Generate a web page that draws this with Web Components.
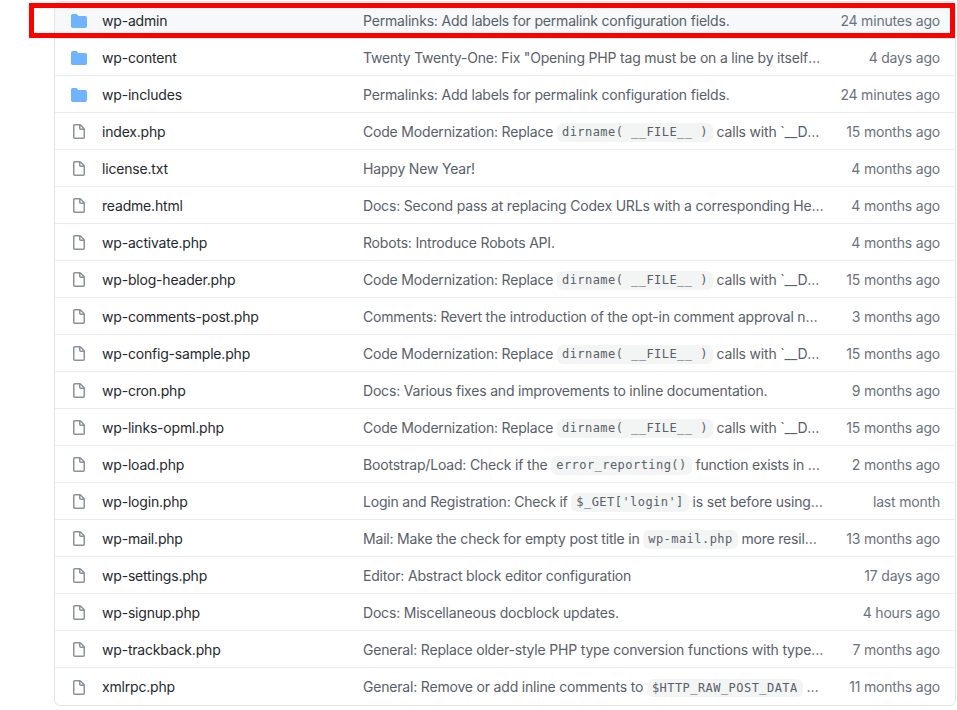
<!DOCTYPE html>
<html lang="en">
<head>
<meta charset="utf-8">
<title>wordpress files</title>
<style>
html,body{margin:0;padding:0;background:#fff}
body{font:14px/21px Inter,"Liberation Sans",sans-serif;color:#24292e}
</style>
</head>
<body>
<file-page>
<file-list>
<file-row kind="dir" name="wp-admin" age="24 minutes ago" hover>Permalinks: Add labels for permalink configuration fields.</file-row>
<file-row kind="dir" name="wp-content" age="4 days ago">Twenty Twenty-One: Fix "Opening PHP tag must be on a line by itself" coding standards violations.</file-row>
<file-row kind="dir" name="wp-includes" age="24 minutes ago">Permalinks: Add labels for permalink configuration fields.</file-row>
<file-row clip="457" name="index.php" age="15 months ago">Code Modernization: Replace <file-code>dirname( __FILE__ )</file-code> calls with `__DIR__` constant.</file-row>
<file-row name="license.txt" age="4 months ago">Happy New Year!</file-row>
<file-row clip="462" name="readme.html" age="4 months ago">Docs: Second pass at replacing Codex URLs with a corresponding HelpHub article.</file-row>
<file-row name="wp-activate.php" age="4 months ago">Robots: Introduce Robots API.</file-row>
<file-row clip="457" name="wp-blog-header.php" age="15 months ago">Code Modernization: Replace <file-code>dirname( __FILE__ )</file-code> calls with `__DIR__` constant.</file-row>
<file-row name="wp-comments-post.php" age="3 months ago">Comments: Revert the introduction of the opt-in comment approval notice.</file-row>
<file-row clip="457" name="wp-config-sample.php" age="15 months ago">Code Modernization: Replace <file-code>dirname( __FILE__ )</file-code> calls with `__DIR__` constant.</file-row>
<file-row name="wp-cron.php" age="9 months ago">Docs: Various fixes and improvements to inline documentation.</file-row>
<file-row clip="457" name="wp-links-opml.php" age="15 months ago">Code Modernization: Replace <file-code>dirname( __FILE__ )</file-code> calls with `__DIR__` constant.</file-row>
<file-row name="wp-load.php" age="2 months ago">Bootstrap/Load: Check if the <file-code>error_reporting()</file-code> function exists in wp-load.php.</file-row>
<file-row name="wp-login.php" age="last month">Login and Registration: Check if <file-code>$_GET['login']</file-code> is set before using it.</file-row>
<file-row clip="456" name="wp-mail.php" age="13 months ago">Mail: Make the check for empty post title in <file-code>wp-mail.php</file-code> more resilient to errors.</file-row>
<file-row name="wp-settings.php" age="17 days ago">Editor: Abstract block editor configuration</file-row>
<file-row name="wp-signup.php" age="4 hours ago">Docs: Miscellaneous docblock updates.</file-row>
<file-row clip="462" name="wp-trackback.php" age="7 months ago">General: Replace older-style PHP type conversion functions with type casts.</file-row>
<file-row name="xmlrpc.php" age="11 months ago" last>General: Remove or add inline comments to <file-code>$HTTP_RAW_POST_DATA</file-code> where it is used.</file-row>
</file-list>
<red-mark slot="overlay"></red-mark>
</file-page>
<script>
function define(name, css, html){
  customElements.define(name, class extends HTMLElement{
    constructor(){
      super();
      const r=this.attachShadow({mode:'open'});
      r.innerHTML='<style>'+css+'</style>'+(typeof html==='function'?html(this):html);
    }
  });
}
define('file-page',
 ':host{display:block;position:relative;width:957px;height:710px;overflow:hidden;box-sizing:border-box;padding:1px 1px 0 54px}',
 '<slot></slot><slot name="overlay"></slot>');
define('file-list',
 ':host{display:block;border:1px solid #e1e4e8;border-radius:6px;overflow:hidden;background:#fff}',
 '<slot></slot>');
const FOLDER='<svg viewBox="0 0 16 16" width="16" height="16" fill="#70b4ff"><path d="M1.75 1A1.75 1.75 0 000 2.75v10.5C0 14.216.784 15 1.75 15h12.5A1.75 1.75 0 0016 13.25v-8.5A1.75 1.75 0 0014.25 3H7.5a.25.25 0 01-.2-.1l-.9-1.2C6.07 1.26 5.55 1 5 1H1.75z"/></svg>';
const FILE='<svg viewBox="0 0 16 16" width="16" height="16" fill="#8a929a"><path fill-rule="evenodd" d="M3.75 1.5a.25.25 0 00-.25.25v11.5c0 .138.112.25.25.25h8.5a.25.25 0 00.25-.25V6H9.75A1.75 1.75 0 018 4.25V1.5H3.75zm5.75.56v2.19c0 .138.112.25.25.25h2.19L9.5 2.06zM2 1.75C2 .784 2.784 0 3.75 0h5.086c.464 0 .909.184 1.237.513l3.414 3.414c.329.328.513.773.513 1.237v8.086A1.75 1.75 0 0112.25 15h-8.5A1.75 1.75 0 012 13.25V1.75z"/></svg>';
define('file-row',
 `:host{display:flex;align-items:center;box-sizing:border-box;height:37px;padding:0 15px 0 16px;border-bottom:1px solid #eaecef;font:14px/21px Inter,"Liberation Sans",sans-serif;letter-spacing:-.19px}
  :host([last]){border-bottom:0}
  :host([hover]){background:#f6f8fa}
  .i{flex:none;width:16px;height:16px;margin:2px 15px 0 0;display:flex}
  .n{flex:none;width:261px;color:#24292e;white-space:nowrap;overflow:hidden}
  .m{flex:none;color:#586069;white-space:nowrap;overflow:hidden;text-overflow:ellipsis}
  .a{flex:1;text-align:right;color:#6a737d;white-space:nowrap}`,
 h=>`<span class="i">${h.getAttribute('kind')==='dir'?FOLDER:FILE}</span><span class="n">${h.getAttribute('name')}</span><span class="m" style="width:${h.getAttribute('clip')||460}px"><slot></slot></span><span class="a">${h.getAttribute('age')}</span>`);
define('file-code',
 ':host{display:inline;font:12px/1 "DejaVu Sans Mono","Liberation Mono",monospace;letter-spacing:.45px;background:rgba(27,31,35,.05);border-radius:6px;padding:2.4px 5px}',
 '<slot></slot>');
define('red-mark',
 ':host{display:block;position:absolute;left:29px;top:3px;width:926px;height:35px;box-sizing:border-box;border:5px solid #f00}',
 '');
</script>
</body>
</html>
